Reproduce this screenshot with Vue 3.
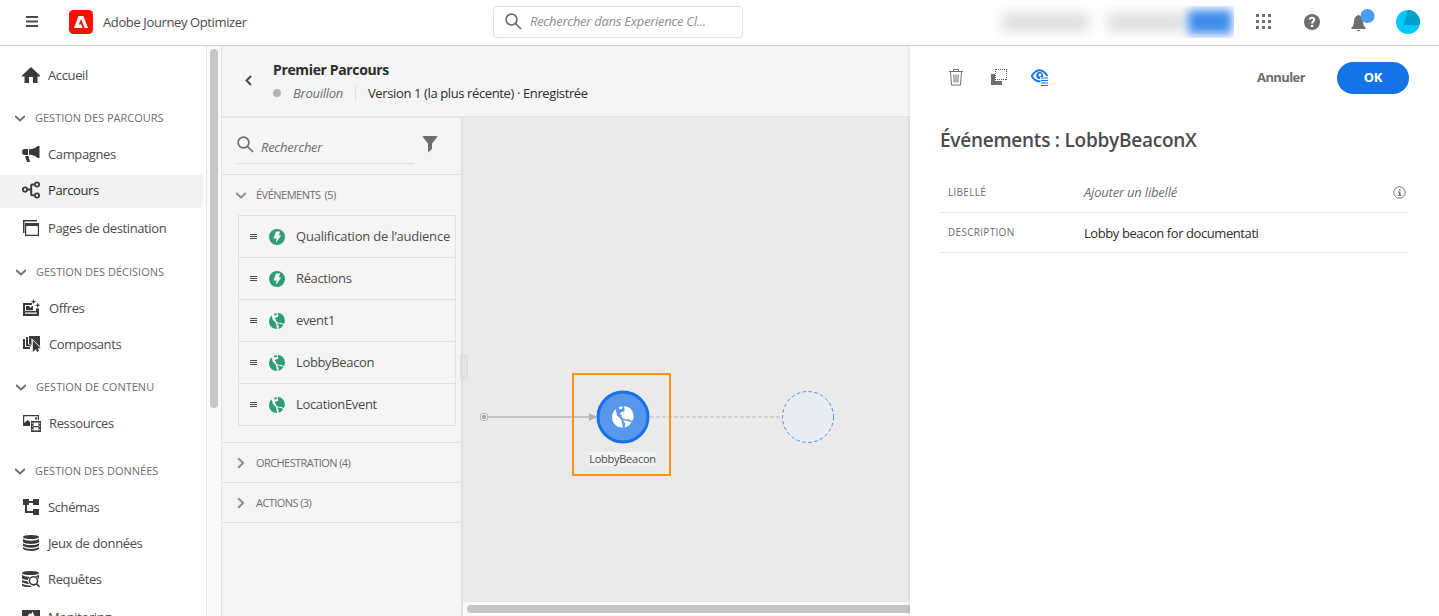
<script setup>
const HOME = 'M9 1 0 9.6V10.5H2.5V17H7V11H11V17H15.500V10.500H18V9.600Z'
const nav = [
  { label: 'Accueil', icon: HOME, gap: 11 },
  { label: 'GESTION DES PARCOURS', head: true, gap: 7 },
  { label: 'Campagnes', icon: 'M0 7Q0 4 3 4H6V10H3Q0 10 0 7ZM7 4.200Q13 4 15.500 1H17.500V13H15.500Q13 10 7 9.800ZM3 11H6.500L8 17H5Z' },
  { label: 'Parcours', icon: 'M3 5.500a3 3 0 1 0 .01 6.200a3 3 0 1 0-.01-6.200ZM3 7.300a1.200 1.200 0 1 1-.01 2.500a1.200 1.200 0 1 1 .01-2.500ZM15 .5a3 3 0 1 0 .01 6a3 3 0 1 0-.01-6ZM15 2.300a1.200 1.200 0 1 1-.01 2.400a1.200 1.200 0 1 1 .01-2.400ZM15 11.500a3 3 0 1 0 .01 6a3 3 0 1 0-.01-6ZM15 13.300a1.200 1.200 0 1 1-.01 2.400a1.200 1.200 0 1 1 .01-2.400ZM12 2.500V4.500H10.200V13.300H12V15.300H10Q8.200 15.300 8.200 13.500V9.600H6V7.600H8.200V4.300Q8.200 2.500 10 2.500Z', active: true },
  { label: 'Pages de destination', icon: 'M1 1H15V2.500H2.500V14H1ZM3 4H17V17H3ZM4.200 7V15.800H15.800V7Z', gap: 2 },
  { label: 'GESTION DES DÉCISIONS', head: true, gap: 8, shift: true },
  { label: 'Offres', shift: true, icon: 'M0 4H9V6H2V12H13V9.500H16V17H0ZM2 13.500V14.800H14V13.500ZM3 7H6L7.500 9L9 7H10V11.200H3ZM10.500 0 11.200 2 13.200 2.700 11.200 3.400 10.500 5.400 9.800 3.400 7.800 2.700 9.800 2ZM14.700 3.500 15.400 5.500 17.500 6.200 15.400 6.900 14.700 9 14 6.900 12 6.200 14 5.500Z' },
  { label: 'Composants', shift: true, icon: 'M0 4H2V12H7V14H0ZM3 2H5V9.500H8V11.200H3ZM6 1H17V11.500L8.500 3.200V10H6ZM9.800 5.500 17.800 13.300H14.800L16 16 14 17 12.700 14.200 9.800 17Z' },
  { label: 'GESTION DE CONTENU', head: true, gap: 7, shift: true },
  { label: 'Ressources', shift: true, icon: 'M0 1H16V6H14.800V2.200H1.200V9L4.500 6 7 8V12H0ZM12 3.500H14V5.500H12ZM8 7H18V18H8ZM10.500 8.500V12H15.500V8.500ZM10.500 13.200V16.600H15.500V13.200ZM8.800 8.500V9.700H9.700V8.500ZM8.800 11.800V13H9.700V11.800ZM8.800 15V16.200H9.700V15ZM16.300 8.500V9.700H17.200V8.500ZM16.300 11.800V13H17.200V11.800ZM16.300 15V16.200H17.200V15Z' },
  { label: 'GESTION DES DONNÉES', head: true, gap: 12 },
  { label: 'Schémas', icon: 'M1 1H7V3H11V1H17V7H11V5H7V7H5V13H11V11H17V17H11V15H3V7H1Z' },
  { label: 'Jeux de données', icon: 'M1 3C1 .3 17 .3 17 3S1 5.700 1 3ZM1 4.800C3 7.300 15 7.300 17 4.800V8C15 10.500 3 10.500 1 8ZM1 9.200C3 11.700 15 11.700 17 9.200V11.800C15 14.300 3 14.300 1 11.800ZM1 13C3 15.500 15 15.500 17 13V14.800C15 17.600 3 17.600 1 14.800Z' },
  { label: 'Requêtes', icon: 'M0 3C0 .3 17 .3 17 3S0 5.700 0 3ZM0 5Q3 7 8 7Q6 8 5.800 10Q2 9.800 0 8.500ZM0 10Q3 11.300 5.800 11.400Q6 13 7.500 14Q2 13.500 0 12.300ZM0 13.800Q3 15.500 8 15.500L10 17Q2 17.300 0 15.500ZM11.500 6a4.800 4.800 0 1 0 2.800 8.700L17 17.500 18 16.300 15.400 13.600A4.800 4.800 0 0 0 11.500 6ZM11.500 7.500a3.300 3.300 0 1 1-.01 6.600a3.300 3.300 0 1 1 .01-6.600ZM13 6.300 17 5V9Q15.500 6.500 13 6.300Z' },
  { label: 'Monitoring', icon: 'M0 2H18V16H0ZM6 7.500 8 5 9 6.500 10.500 3.500 12.500 8V14H6Z', gap: 2 }
]
const GLOBE = 'M2.600 2.200C2.400 3.600 3.600 4.500 3.500 6C4 7.600 5.200 8.200 6.300 9.300C7.600 10.600 7 12 8.200 15.900C4 16 .8 13.500.2 10C-.3 7 .6 4.200 2.600 2.200ZM4.800 1L7.500.1 8 1.200 6.800 2.400 5.500 2.200ZM8.700.1C12 .2 14 1.800 15.200 4.200L16 8 15.400 10.300 14 11 12.300 9.700 10.600 10 8.500 9.300 6.800 7.900 7.400 6.700 5.600 6 6.800 4.400 9 4 9.300 2.600ZM8.200 10.700C10 10.200 12 11.300 14.400 12C13 14.300 11 15.500 9.300 15.800L9.800 13Z'
const BOLT = 'M8 0a8 8 0 1 0 .01 16A8 8 0 0 0 8 0ZM7 2.400H11.200L9.800 6.200H12.300L7 13.800 7.500 9.500H4.400Z'
const events = [
  { label: 'Qualification de l’audience', icon: BOLT },
  { label: 'Réactions', icon: BOLT },
  { label: 'event1', icon: GLOBE },
  { label: 'LobbyBeacon', icon: GLOBE },
  { label: 'LocationEvent', icon: GLOBE }
]
const dots = [0, 6, 12]
</script>

<template>
  <div class="app">
    <header class="top">
      <svg class="burger" width="12" height="11"><path d="M0 1H12M0 5.500H12M0 10H12" stroke="#4b4b4b" stroke-width="2" /></svg>
      <svg class="logo" width="24" height="24" viewBox="0 0 24 24"><rect width="24" height="24" rx="4.500" fill="#fa0f00" /><path d="M9.500 6H14.400L19 18H15.700L12 8.900 9.800 14.400H12.300L13.600 18H5Z" fill="#fff" /></svg>
      <span class="product">Adobe Journey Optimizer</span>
      <div class="gsearch">
        <svg width="17" height="17" viewBox="0 0 17 17"><circle cx="6.500" cy="6.500" r="5.400" /><path d="M10.500 10.500 16 16" /></svg>
        <span>Rechercher dans Experience Cl...</span>
      </div>
      <div class="tools">
        <div class="org"><i class="g1"></i><i class="g2"></i><i class="g3"></i></div>
        <svg class="grid" width="16" height="16"><template v-for="y in dots" :key="y"><rect v-for="x in dots" :key="x" :x="x" :y="y" width="3" height="3" /></template></svg>
        <svg class="help" width="16" height="16" viewBox="0 0 16 16"><circle cx="8" cy="8" r="8" fill="#6e6e6e" /><path d="M5.600 5.700Q5.900 3.800 8 3.800T10.300 5.600Q10.300 6.700 9.200 7.300T8.100 9.500" fill="none" stroke="#fff" stroke-width="2" /><circle cx="8.100" cy="12" r="1.300" fill="#fff" /></svg>
        <svg class="bell" width="24" height="24" viewBox="0 0 24 24"><path d="M6.500 6.500Q7.500 5 8.500 6.500Q12 8 12 12Q12 17 14.500 18.500V20H.5V18.500Q3 17 3 12Q3 8 6.500 6.500ZM5.500 21H9.500Q7.500 23.500 5.500 21Z" fill="#6e6e6e" /><circle cx="16.500" cy="7" r="7" fill="#4b9cf5" /></svg>
        <svg class="avatar" width="24" height="24" viewBox="0 0 24 24"><circle cx="12" cy="12" r="12" fill="#00c8ff" /><path d="M12 0A12 12 0 0 1 23.500 15H7Z" fill="#00a0cc" /></svg>
      </div>
    </header>

    <div class="body">
      <nav>
        <div class="navlist">
          <div v-for="n in nav" :key="n.label" class="row" :class="{ head: n.head, active: n.active, shift: n.shift }" :style="{ marginTop: (n.gap || 0) + 'px' }">
            <svg v-if="n.head" class="chev" width="10" height="7"><path d="M0 1 5 5.500 10 1" /></svg>
            <svg v-else class="nicon" width="18" height="18" viewBox="0 0 18 18"><path :d="n.icon" fill-rule="evenodd" /></svg>
            <span>{{ n.label }}</span>
          </div>
        </div>
        <div class="track"><div class="thumb"></div></div>
      </nav>

      <main>
        <div class="jhead">
          <svg width="7" height="11"><path d="M6 1 1.500 5.500 6 10" fill="none" stroke="#4b4b4b" stroke-width="2" /></svg>
          <div>
            <div class="title">Premier Parcours</div>
            <div class="status"><i class="dot"></i><em>Brouillon</em><b></b><span>Version 1 (la plus récente) · Enregistrée</span></div>
          </div>
        </div>
        <div class="work">
          <aside>
            <div class="find">
              <div class="field">
                <svg width="17" height="17" viewBox="0 0 17 17"><circle cx="6.500" cy="6.500" r="5.400" /><path d="M10.500 10.500 16 16" /></svg>
                <span>Rechercher</span>
              </div>
              <svg class="funnel" width="16" height="17"><path d="M.5 0H15.500Q15.500 1 10 7.500V13L6 16.500V7.500Q.5 1 .5 0Z" fill="#6e6e6e" /></svg>
            </div>
            <section>
              <div class="sec"><svg width="10" height="7"><path d="M0 1 5 5.500 10 1" /></svg><span>ÉVÉNEMENTS</span><span class="count">(5)</span></div>
              <ul>
                <li v-for="e in events" :key="e.label">
                  <svg class="drag" width="7" height="6"><path d="M0 .5H7M0 2.500H7M0 4.500H7" stroke="#4b4b4b" /></svg>
                  <svg width="16" height="16" viewBox="0 0 16 16"><path :d="e.icon" fill="#2d9d78" fill-rule="evenodd" /></svg>
                  <span>{{ e.label }}</span>
                </li>
              </ul>
            </section>
            <section class="closed"><svg width="7" height="10"><path d="M1 0 6 5 1 10" /></svg><span>ORCHESTRATION (4)</span></section>
            <section class="closed"><svg width="7" height="10"><path d="M1 0 6 5 1 10" /></svg><span>ACTIONS (3)</span></section>
          </aside>
          <div class="canvas">
            <svg class="flow" width="447" height="486">
              <rect x="17.500" y="296.500" width="7" height="7" rx="2" fill="none" stroke="#b8b8b8" />
              <circle cx="21" cy="300" r="2.200" fill="#aaa" />
              <path d="M25 300H128" stroke="#c6c6c6" stroke-width="2" />
              <path d="M126 296 134 300 126 304Z" fill="#b0b0b0" />
              <path d="M187 300H319" stroke="#c8c8c8" stroke-width="1.500" stroke-dasharray="4 2" />
              <circle cx="160" cy="300" r="25" fill="#5798ec" stroke="#1473e6" stroke-width="3" />
              <path :d="GLOBE" fill="#fff" transform="translate(149 289) scale(1.360)" />
              <circle cx="345" cy="300" r="25.500" fill="#e7edf3" stroke="#4a8eea" stroke-dasharray="3.500 2.500" />
            </svg>
            <div class="mark"><span>LobbyBeacon</span></div>
            <div class="hbar"><i></i></div>
            <div class="grip"><i></i></div>
          </div>
        </div>
      </main>

      <div class="panel">
        <div class="actions">
          <svg width="16" height="17" fill="none" stroke="#6e6e6e"><path d="M1 2.500H15M5.500 2V.5H10.500V2M2.500 3 3.500 16H12.500L13.500 3M5.800 5.500 6.200 13.500M8 5.500V13.500M10.200 5.500 9.800 13.500" /></svg>
          <svg class="copy" width="17" height="17"><path d="M0 5H4V12H11V16H0Z" fill="#6e6e6e" /><path d="M4.500 0V11M15.500 0V11M5 .5H15M6 10.500H15" fill="none" stroke="#555" stroke-dasharray="1 1" /></svg>
          <svg class="eye" width="18" height="18" viewBox="0 0 18 18"><path d="M.5 7Q8.500-4.500 16.500 7M.5 7Q4 12.500 9.500 12.500" fill="none" stroke="#1473e6" stroke-width="1.800" /><path d="M8.500 3A3.500 3.500 0 1 0 9 10V8H12V6.500A3.500 3.500 0 0 0 8.500 3ZM9 4.500A1.500 1.500 0 1 1 8.900 7.500A1.500 1.500 0 1 1 9 4.500Z" fill="#1473e6" fill-rule="evenodd" /><path d="M10 9H17M10 11.500H17M10 14H17M10 16.500H17" stroke="#1473e6" stroke-width="1.200" /></svg>
          <span class="cancel">Annuler</span>
          <button>OK</button>
        </div>
        <h1>Événements : LobbyBeaconX</h1>
        <div class="form"><label>LIBELLÉ</label><em>Ajouter un libellé</em><svg width="13" height="13"><circle cx="6.500" cy="6.500" r="5.700" fill="none" stroke="#6e6e6e" /><path d="M6 3H7.500V4.500H6ZM5 5.500H7.500V9H8.500V10H5V9H6V6.500H5Z" fill="#6e6e6e" /></svg></div>
        <div class="form two"><label>DESCRIPTION</label><span class="desc">Lobby beacon for documentati</span></div>
      </div>
    </div>
  </div>
</template>

<style>
html, body { margin: 0; overflow: hidden; background: #fff; }
</style>
<style scoped>
* { box-sizing: border-box; }
.app { width: 1439px; height: 616px; overflow: hidden; display: flex; flex-direction: column; font: 13px/18px "Open Sans", "Noto Sans", sans-serif; letter-spacing: -.38px; color: #4b4b4b; white-space: nowrap; }
svg { display: block; flex: none; }
.top { height: 46px; flex: none; display: flex; align-items: center; padding: 0 19px 2px 26px; border-bottom: 1px solid #cfcfcf; background: #fefefe; }
.logo { margin-left: 31px; }
.product { margin-left: 10px; width: 390px; }
.gsearch { width: 250px; height: 32px; border: 1px solid #e1e1e1; border-radius: 4px; display: flex; align-items: center; padding-left: 11px; background: #fff; font-style: italic; letter-spacing: -.27px; color: #8e8e8e; }
.gsearch span { margin: -2px 0 0 8px; }
.gsearch svg, .field svg { fill: none; stroke: #6e6e6e; stroke-width: 1.700; }
.tools { margin-left: auto; display: flex; align-items: center; }
.org { width: 240px; height: 32px; overflow: hidden; display: flex; align-items: center; }
.org i { filter: blur(6px); background: #dedede; height: 18px; }
.g1 { width: 86px; margin-left: 8px; }
.g2 { width: 78px; margin-left: 20px; }
.org .g3 { width: 44px; height: 24px; background: #3f8cec; margin-left: 2px; filter: blur(5px); }
.grid { fill: #6e6e6e; margin-left: 22px; }
.help { margin-left: 32px; }
.bell { margin-left: 31px; margin-top: -2px; }
.avatar { margin-left: 21px; }
.body { flex: 1; min-height: 0; display: flex; }
nav { width: 221px; flex: none; display: flex; }
.navlist { width: 206px; overflow: hidden; }
.row { height: 36px; display: flex; align-items: center; padding-left: 22px; }
.row span { margin-left: 8px; }
.row.shift { padding-left: 23px; }
.nicon { fill: #3a3a3a; }
.active { margin-right: 3px; background: linear-gradient(#fff 3px, #f2f2f2 3px); border-radius: 0 0 4px 0; color: #2c2c2c; }
.head { font-size: 11px; letter-spacing: 0; color: #6e6e6e; padding-left: 15px; }
.row.head.shift { padding-left: 16px; }
.head span { margin-left: 10px; }
.chev, .sec svg, .closed svg { fill: none; stroke: #6e6e6e; stroke-width: 2; }
.track { width: 15px; border-left: 1px solid #e8e8e8; background: #fafafa; padding: 3px 0 0 3px; }
.thumb { width: 8px; height: 359px; border-radius: 4px; background: #c6c6c6; }
main { width: 689px; flex: none; display: flex; flex-direction: column; border-left: 1px solid #e4e4e4; background: #f5f5f5; }
.jhead { height: 71px; display: flex; padding-left: 23px; border-bottom: 1px solid #e4e4e4; flex: none; }
.jhead > svg { margin-top: 29px; }
.jhead > div { margin: 15px 0 0 21px; }
.title { font-size: 14px; letter-spacing: -.36px; font-weight: 700; color: #2c2c2c; }
.status { display: flex; align-items: center; height: 18px; margin-top: 5px; color: #2c2c2c; }
.dot { width: 8px; height: 8px; border-radius: 50%; background: #b3b3b3; }
.status em { margin-left: 12px; width: 62px; letter-spacing: -.27px; color: #6e6e6e; }
.status b { width: 1px; height: 16px; background: #e1e1e1; margin-right: 12px; }
.work { flex: 1; min-height: 0; display: flex; }
aside { width: 241px; border-right: 2px solid #e0e0e0; border-top: 1px solid #eaeaea; flex: none; }
.find { height: 57px; border-bottom: 1px solid #e1e1e1; display: flex; padding-left: 15px; }
.field { width: 177px; height: 46px; border-bottom: 1px solid #dcdcdc; display: flex; padding-top: 18px; font-style: italic; letter-spacing: -.27px; color: #6e6e6e; }
.field span { margin: 2px 0 0 7px; }
.funnel { margin: 18px 0 0 8px; }
section { border-bottom: 1px solid #e1e1e1; height: 268px; }
.sec { display: flex; align-items: center; height: 40px; font-size: 11px; letter-spacing: -.5px; color: #6e6e6e; padding-left: 14px; }
.sec span { margin-left: 10px; }
.sec .count { margin-left: 4px; }
.sec svg, .closed svg { stroke: #8e8e8e; }
.closed { display: flex; align-items: center; height: 40px; padding-left: 15px; font-size: 11px; letter-spacing: -.57px; color: #6e6e6e; }
.closed span { margin-left: 12px; }
ul { list-style: none; margin: 0 0 0 16px; padding: 0; width: 218px; border: 1px solid #e1e1e1; }
li { height: 42px; border-bottom: 1px solid #e1e1e1; display: flex; align-items: center; padding-left: 11px; letter-spacing: -.35px; }
li:first-child { letter-spacing: -.2px; }
li:last-child { border: 0; height: 41px; }
li span { margin: -1px 0 0 11px; }
.drag { margin-right: 12px; }
.canvas { flex: 1; position: relative; background: #eaeaea; overflow: visible; }
.flow { position: absolute; left: 0; top: 0; }
.mark { position: absolute; left: 109px; top: 256px; width: 99px; height: 103px; border: 2px solid #f7941d; font-size: 11px; letter-spacing: -.25px; line-height: 14px; display: flex; align-items: flex-end; justify-content: center; padding: 0 0 8px 2px; }
.mark span { background: #f4f4f4; border-radius: 2px; width: 67px; display: flex; justify-content: center; }
.hbar { position: absolute; left: 0; right: 0; bottom: 0; height: 14px; background: #fafafa; padding: 3px 0 0 4px; }
.hbar i { display: block; height: 8px; border-radius: 4px 0 0 4px; background: #c6c6c6; }
.grip { position: absolute; left: -3px; top: 238px; width: 8px; height: 24px; background: #e0e0e0; padding: 3px; }
.grip i { display: block; width: 3px; height: 18px; border: solid #eaeaea; border-width: 0 1px; }
.panel { flex: 1; background: #fff; padding: 16px 30px 0; box-shadow: 0 0 4px rgba(0,0,0,.12); position: relative; clip-path: inset(0 0 0 -4px); }
.actions { height: 32px; display: flex; align-items: center; padding: 0 0 1px 8px; font-weight: 700; letter-spacing: -.6px; color: #6e6e6e; }
.copy { margin-left: 27px; }
.eye { margin-left: 23px; }
.cancel { margin: -1px 0 0 auto; }
button { width: 72px; height: 32px; border: 0; border-radius: 16px; background: #1473e6; color: #fff; font: inherit; letter-spacing: -.3px; margin: 1px 0 0 32px; padding: 0 0 2px; }
h1 { margin: 33px 0 0; font-size: 19px; line-height: 26px; font-weight: 600; height: 26px; letter-spacing: -.25px; }
.form { margin-top: 20px; height: 40px; border-bottom: 1px solid #e6e6e6; display: flex; align-items: center; padding: 0 3px 0 8px; }
.form.two { margin: 0; }
label { width: 136px; margin-top: -2px; font-size: 10px; color: #6e6e6e; letter-spacing: .3px; }
.form em { margin-top: -2px; letter-spacing: -.2px; color: #6e6e6e; flex: 1; }
.desc { color: #2c2c2c; letter-spacing: -.42px; }
</style>
